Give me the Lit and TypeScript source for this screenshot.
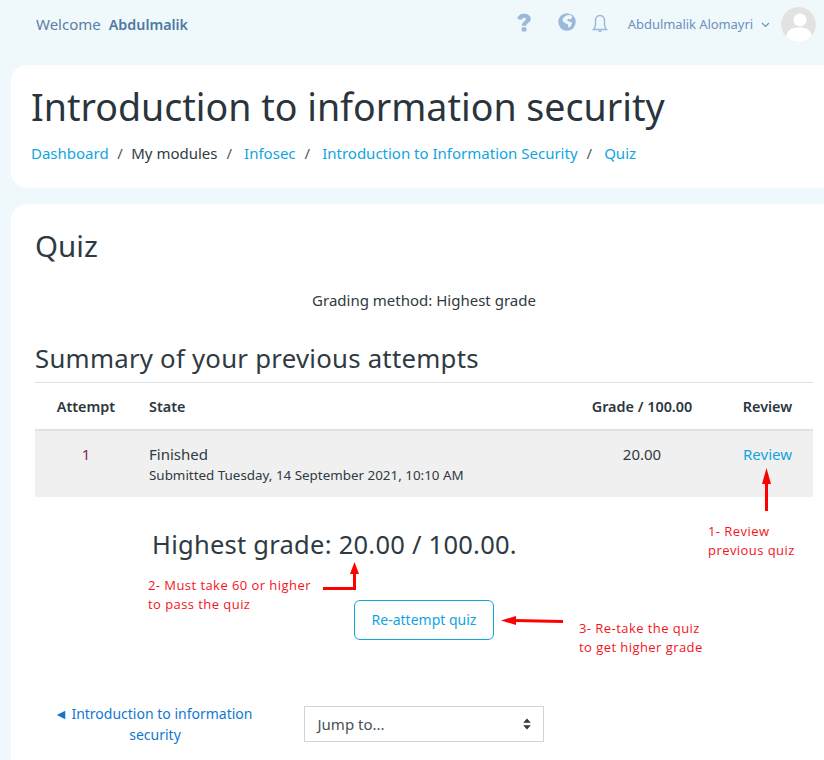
import {LitElement, html, css, svg} from 'lit';
import {customElement} from 'lit/decorators.js';

const crumbs = ['Infosec', 'Introduction to Information Security', 'Quiz'];

@customElement('app-root')
export class AppRoot extends LitElement {

  static styles = css`
    :host {
      display: block;
      position: relative;
      width: 824px;
      height: 760px;
      overflow: hidden;
      background: #eff8fb;
      color: #2f3a42;
      font-family: "Noto Sans", "Open Sans", sans-serif;
      font-size: 15px;
    }

    a { color: #10a5e0; text-decoration: none; }

    .topbar {
      height: 65px;
      display: flex;
      align-items: flex-start;
      padding: 7px 8px 0 36px;
      box-sizing: border-box;
    }
    .welcome {
      display: flex;
      align-items: baseline;
      gap: 8px;
      color: #5b7fa5;
      font-size: 15px;
      line-height: 34px;
    }
    .welcome b { font-weight: 600; color: #4f78a5; font-size: 14.3px; }
    .actions {
      margin-left: auto;
      display: flex;
      align-items: center;
      height: 35px;
    }
    .actions svg.top { margin-bottom: 6px; }
    .actions svg.help { margin-bottom: 4px; }
    .actions svg.bell { margin-bottom: 2px; }
    .user { color: #6d90bd; font-size: 13px; margin-left: 20px; margin-bottom: 2px; letter-spacing: -0.07px; }
    .caret { margin: 0 11px 0 8px; }
    .avatar { border-radius: 50%; display: block; }
    .globe { margin-left: 26px; }
    .bell { margin-left: 16px; }

    .card {
      background: #fff;
      border-radius: 16px;
      margin: 0 -24px 16px 11px;
    }
    .page-head {
      height: 123px;
      box-sizing: border-box;
      padding: 17px 0 0 20px;
    }
    h1 {
      margin: 0;
      font-size: 37.55px;
      font-weight: 400;
      line-height: 50px;
      color: #2a343c;
    }
    .crumbs {
      display: flex;
      margin-top: 10px;
      line-height: 22px;
      font-size: 15px;
      white-space: nowrap;
    }
    .sep { margin: 0 8.5px; color: #555; }
    .sep.wide { margin: 0 12px 0 9px; }

    .main {
      padding: 23px 35px 0 24px;
      height: 600px;
    }
    h2 {
      margin: 0;
      font-size: 29.5px;
      font-weight: 400;
      line-height: 38px;
    }
    .method {
      text-align: center;
      margin: 24px 0 0 0;
      line-height: 22px;
    }
    h3 {
      margin: 29px 0 0;
      font-size: 25.75px;
      font-weight: 400;
      line-height: 36px;
      letter-spacing: 0.25px;
    }
    table {
      width: 778px;
      margin-top: 6px;
      border-collapse: collapse;
      table-layout: fixed;
      border-top: 1px solid #dee2e6;
    }
    th {
      font-weight: 600;
      font-size: 14.4px;
      color: #2c363e;
      height: 46px;
      padding: 0;
      border-bottom: 2px solid #dee2e6;
    }
    td {
      background: #f0f0f0;
      height: 67px;
      padding: 12px 0 0;
      box-sizing: border-box;
      vertical-align: top;
      line-height: 22px;
    }
    .c-attempt { width: 102px; text-align: center; }
    .c-state { text-align: left; padding-left: 12px; }
    .c-grade { width: 160px; text-align: center; }
    .c-review { width: 91px; text-align: center; }
    td.c-attempt { color: #7a2e4d; }
    .sub { font-size: 13.4px; line-height: 20px; }

    .feedback {
      margin: 27px 0 0 117px;
      font-size: 25.5px;
      line-height: 40px;
      letter-spacing: 0.25px;
    }
    .reattempt-row {
      margin: 36px 0 0 319px;
    }
    .btn {
      display: inline-block;
      box-sizing: border-box;
      width: 140px;
      height: 40px;
      line-height: 38px;
      text-align: center;
      font-size: 14px;
      border: 1px solid #0fa8d8;
      border-radius: 6px;
      color: #10a5e0;
    }
    .nav-row {
      display: flex;
      margin-top: 63px;
      align-items: flex-start;
    }
    .prev {
      width: 240px;
      text-align: center;
      font-size: 14px;
      line-height: 21px;
      flex: none;
    }
    .prev a { color: #1177d1; }
    .jump {
      margin-left: 29px;
      margin-top: 3px;
      width: 240px;
      height: 36px;
      box-sizing: border-box;
      border: 1px solid #ced4da;
      display: flex;
      align-items: center;
      justify-content: space-between;
      padding: 0 12px 0 12.5px;
      color: #495057;
      font-size: 15px;
    }

    .note {
      position: absolute;
      color: #f5141a;
      font-family: "Open Sans", sans-serif;
      font-size: 13px;
      line-height: 19px;
      letter-spacing: 0.44px;
      white-space: pre;
    }
    .arrows {
      position: absolute;
      inset: 0;
      pointer-events: none;
    }
  `;

  renderArrows() {
    return svg`
      <path d="M766.500 511V484" stroke="#f00" stroke-width="3" fill="none"/>
      <path d="M766.500 468L771 484H762Z" fill="#f00"/>
      <path d="M323 588.500H354.500V570" stroke="#f00" stroke-width="3" fill="none"/>
      <path d="M354.500 562L359 574H350Z" fill="#f00"/>
      <path d="M563 621.500L514 620.500" stroke="#f00" stroke-width="3" fill="none"/>
      <path d="M501 620.500L516 616V625Z" fill="#f00"/>
    `;
  }

  render() {
    return html`
      <div class="topbar">
        <div class="welcome"><span>Welcome</span><b>Abdulmalik</b></div>
        <div class="actions">
          <svg class="help" width="16" height="20" viewBox="0 0 16 20">
            <path d="M1.500 6C1.500 2.800 4.500 0.800 8 0.800C11.800 0.800 14.800 2.800 14.800 5.800C14.800 9.800 10.300 9.800 10.300 12.800H5.800C5.800 8.600 9.800 8 9.800 6.200C9.800 5.300 9 4.800 8 4.800C7 4.800 6.200 5.500 5.800 6.800Z" fill="#9ab8da"/>
            <rect x="5.700" y="14.300" width="4.700" height="4.200" rx="0.800" fill="#9ab8da"/>
          </svg>
          <svg class="top globe" width="18" height="18" viewBox="0 0 18 18">
            <circle cx="9" cy="9" r="8.700" fill="#9ab8da"/>
            <path d="M8 2.500L12 1.800L14.500 4L12.500 6.500L10 5.800L9 7.500L11 8.500L14 9.500L13 13L10.500 15L10 11.500L7 10L4.500 8L5 5Z" fill="#eff8fb"/>
          </svg>
          <svg class="bell" width="16" height="20" viewBox="0 0 16 20">
            <path d="M8 1.500C5.200 1.500 3.500 3.800 3.500 6.500V11C3.500 13 2.800 14 1.500 15.500H14.500C13.200 14 12.500 13 12.500 11V6.500C12.500 3.800 10.800 1.500 8 1.500Z" fill="none" stroke="#9ab8da" stroke-width="1.400"/>
            <path d="M6 16.500C6.300 18.800 9.700 18.800 10 16.500Z" fill="#9ab8da"/>
          </svg>
          <span class="user">Abdulmalik Alomayri</span>
          <svg class="caret" width="9" height="6" viewBox="0 0 9 6"><path d="M1 1L4.500 4.500L8 1" fill="none" stroke="#6d90bd" stroke-width="1.200"/></svg>
          <svg class="avatar" width="35" height="35" viewBox="0 0 35 35">
            <circle cx="17.500" cy="17.500" r="17.500" fill="#e2e2e2"/>
            <circle cx="19" cy="13" r="6.500" fill="#fff"/>
            <path d="M5 30C6 22 12 20.500 19 20.500C25 20.500 30 23 31 29C27 33 22 35 17.500 35C13 35 8.500 33 5 30Z" fill="#fff"/>
          </svg>
        </div>
      </div>

      <div class="card page-head">
        <h1>Introduction to information security</h1>
        <nav class="crumbs">
          <a href="#">Dashboard</a>
          <span class="sep">/</span>
          <span>My modules</span>
          <span class="sep wide">/</span>
          ${crumbs.map((c, i) => html`
            <a href="#">${c}</a>
            ${i < crumbs.length - 1 ? html`<span class="sep wide">/</span>` : ''}
          `)}
        </nav>
      </div>

      <div class="card main">
        <h2>Quiz</h2>
        <p class="method">Grading method: Highest grade</p>
        <h3>Summary of your previous attempts</h3>
        <table>
          <thead>
            <tr>
              <th class="c-attempt">Attempt</th>
              <th class="c-state">State</th>
              <th class="c-grade">Grade / 100.00</th>
              <th class="c-review">Review</th>
            </tr>
          </thead>
          <tbody>
            <tr>
              <td class="c-attempt">1</td>
              <td class="c-state">Finished<div class="sub">Submitted Tuesday, 14 September 2021, 10:10 AM</div></td>
              <td class="c-grade">20.00</td>
              <td class="c-review"><a href="#">Review</a></td>
            </tr>
          </tbody>
        </table>
        <div class="feedback">Highest grade: 20.00 / 100.00.</div>
        <div class="reattempt-row"><a class="btn" href="#">Re-attempt quiz</a></div>
        <div class="nav-row">
          <div class="prev"><a href="#">◄ Introduction to information&nbsp; security</a></div>
          <div class="jump">
            <span>Jump to...</span>
            <svg width="8" height="12" viewBox="0 0 8 12">
              <path d="M4 0.500L7.800 4.800H0.200Z M4 11.500L0.200 7.200H7.800Z" fill="#343a40"/>
            </svg>
          </div>
        </div>
      </div>

      <svg class="arrows" width="824" height="760" viewBox="0 0 824 760">${this.renderArrows()}</svg>
      <div class="note" style="left:708px;top:522px">1- Review
previous quiz</div>
      <div class="note" style="left:148px;top:576px">2- Must take 60 or higher
to pass the quiz</div>
      <div class="note" style="left:579px;top:619px">3- Re-take the quiz
to get higher grade</div>
    `;
  }
}
